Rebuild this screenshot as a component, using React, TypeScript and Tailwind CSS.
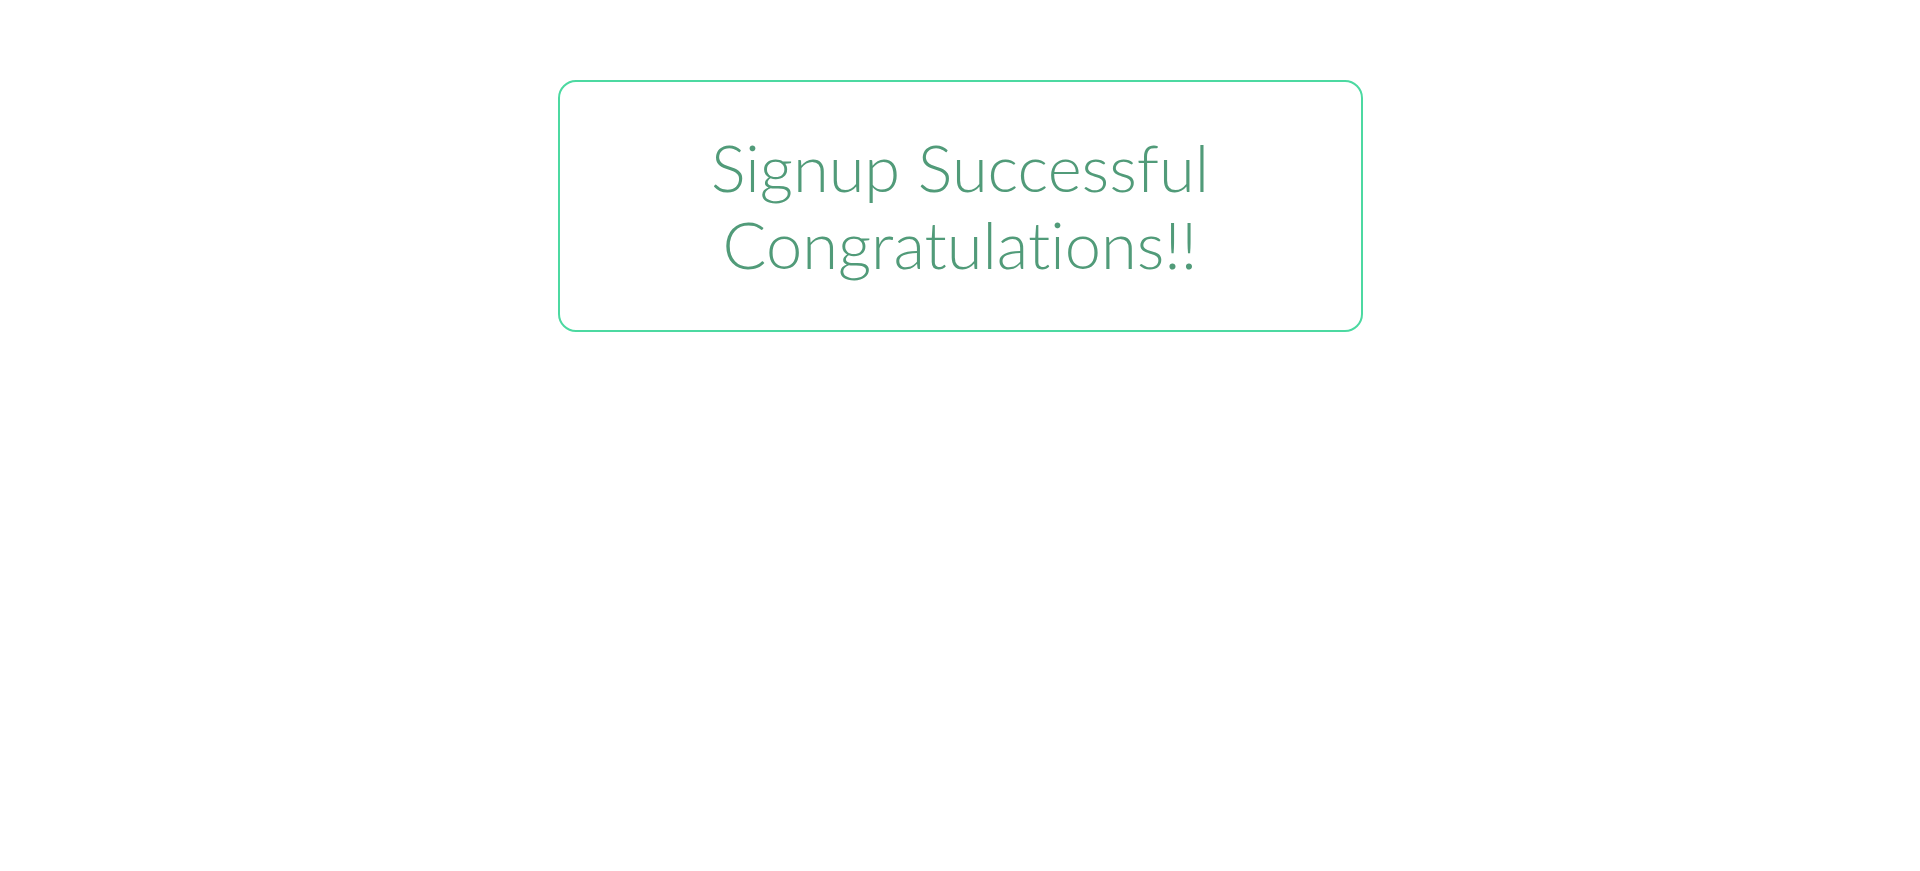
export default function App() {
  return (
    <div className="min-h-screen bg-white pt-[80px]">
      <div className="mx-auto flex h-[252px] w-[805px] items-center justify-center rounded-[18px] border-2 border-[#4cd9a1]">
        <h1 className="text-center font-['Lato',sans-serif] text-[65px] font-light leading-[77px] text-[#519b79] [font-variant-ligatures:none]">
          Signup Successful
          <br />
          Congratulations!!
        </h1>
      </div>
    </div>
  );
}
